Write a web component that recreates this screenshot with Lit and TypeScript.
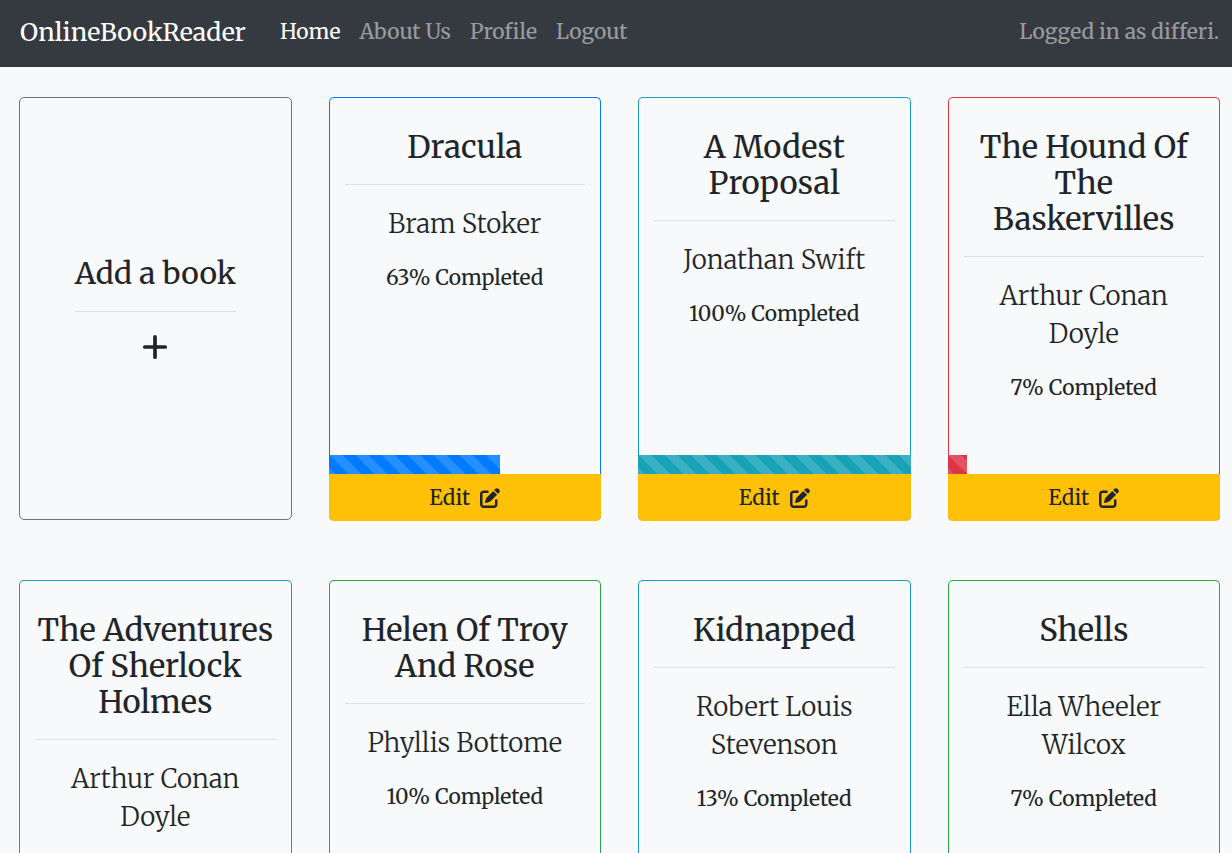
import { LitElement, html, css } from "lit";
import { customElement, property } from "lit/decorators.js";
import { classMap } from "lit/directives/class-map.js";

type Tone = "primary" | "info" | "danger" | "success";

interface Book {
  title: string;
  author: string;
  progress: number;
  tone: Tone;
}

const BOOKS: Book[] = [
  { title: "Dracula", author: "Bram Stoker", progress: 63, tone: "primary" },
  { title: "A Modest Proposal", author: "Jonathan Swift", progress: 100, tone: "info" },
  { title: "The Hound Of The Baskervilles", author: "Arthur Conan Doyle", progress: 7, tone: "danger" },
  { title: "The Adventures Of Sherlock Holmes", author: "Arthur Conan Doyle", progress: 10, tone: "info" },
  { title: "Helen Of Troy And Rose", author: "Phyllis Bottome", progress: 10, tone: "success" },
  { title: "Kidnapped", author: "Robert Louis Stevenson", progress: 13, tone: "info" },
  { title: "Shells", author: "Ella Wheeler Wilcox", progress: 7, tone: "success" },
];

@customElement("nav-bar")
class NavBar extends LitElement {
  static styles = css`
    :host {
      display: block;
      background: #343a40;
    }
    .bar {
      display: flex;
      align-items: center;
      min-height: 67px;
      padding: 0 13px 4px 20px;
      box-sizing: border-box;
    }
    a {
      text-decoration: none;
      color: rgba(255, 255, 255, 0.5);
    }
    .brand {
      margin-right: 34px;
      font-size: 25px;
      line-height: 36px;
      color: #fff;
    }
    .links {
      display: flex;
      gap: 19px;
      margin: 0;
      padding: 0;
      list-style: none;
    }
    .links .active {
      color: #fff;
    }
    .user {
      margin-left: auto;
      color: rgba(255, 255, 255, 0.5);
    }
  `;

  render() {
    return html`
      <nav class="bar">
        <a class="brand" href="#">OnlineBookReader</a>
        <ul class="links">
          <li><a class="active" href="#home">Home</a></li>
          <li><a href="#about">About Us</a></li>
          <li><a href="#profile">Profile</a></li>
          <li><a href="#logout">Logout</a></li>
        </ul>
        <span class="user">Logged in as differi.</span>
      </nav>
    `;
  }
}

@customElement("book-card")
class BookCard extends LitElement {
  @property({ attribute: false }) book!: Book;

  static styles = css`
    :host {
      display: flex;
    }
    .card {
      --tone: #007bff;
      flex: 1;
      min-width: 0;
      display: flex;
      flex-direction: column;
      border: 1px solid var(--tone);
      border-bottom: 0;
      border-radius: 5px;
      text-align: center;
    }
    .info {
      --tone: #17a2b8;
    }
    .danger {
      --tone: #dc3545;
    }
    .success {
      --tone: #28a745;
    }
    .body {
      flex: 1;
      padding: 31px 15px;
    }
    h3 {
      margin: 0;
      font-size: 31px;
      line-height: 36px;
      font-weight: 400;
    }
    hr {
      margin: 19px 0 20px;
      border: 0;
      border-top: 1px solid rgba(0, 0, 0, 0.1);
    }
    p {
      margin: 0;
    }
    .author {
      margin-bottom: 19px;
      padding: 0 16px;
      font-size: 26px;
      line-height: 38px;
      font-weight: 300;
    }
    .progress {
      margin: 0 -1px;
    }
    .fill {
      height: 19px;
      background-color: var(--tone);
      background-image: linear-gradient(
        45deg,
        rgba(255, 255, 255, 0.15) 25%,
        transparent 25%,
        transparent 50%,
        rgba(255, 255, 255, 0.15) 50%,
        rgba(255, 255, 255, 0.15) 75%,
        transparent 75%
      );
      background-size: 26px 26px;
    }
    .edit {
      display: flex;
      align-items: center;
      justify-content: center;
      gap: 10px;
      height: 47px;
      margin: 0 -1px;
      padding: 0;
      border: 0;
      border-radius: 0 0 5px 5px;
      background: #ffc107;
      color: #212529;
      font: inherit;
      cursor: pointer;
    }
    .edit svg {
      width: 20px;
      height: 20px;
      fill: currentColor;
    }
  `;

  render() {
    const { title, author, progress, tone } = this.book;
    return html`
      <article class=${classMap({ card: true, [tone]: true })}>
        <div class="body">
          <h3>${title}</h3>
          <hr />
          <p class="author">${author}</p>
          <p>${progress}% Completed</p>
        </div>
        <div class="progress">
          <div class="fill" style="width: ${progress}%"></div>
        </div>
        <button class="edit" type="button">
          Edit
          <svg viewBox="0 0 512 512" aria-hidden="true">
            <path d="M471.6 21.7c-21.9-21.9-57.3-21.9-79.2 0L362.3 51.7l97.9 97.9 30.1-30.1c21.9-21.9 21.9-57.3 0-79.2L471.6 21.7zm-299.2 220c-6.1 6.1-10.8 13.6-13.5 21.9l-29.6 88.8c-2.9 8.6-.6 18.1 5.8 24.6s15.9 8.7 24.6 5.8l88.8-29.6c8.2-2.7 15.7-7.4 21.9-13.5L437.7 172.3 339.7 74.3 172.4 241.7zM96 64C43 64 0 107 0 160V416c0 53 43 96 96 96H352c53 0 96-43 96-96V320c0-17.7-14.3-32-32-32s-32 14.3-32 32v96c0 17.7-14.3 32-32 32H96c-17.7 0-32-14.3-32-32V160c0-17.7 14.3-32 32-32h96c17.7 0 32-14.3 32-32s-14.3-32-32-32H96z" />
          </svg>
        </button>
      </article>
    `;
  }
}

@customElement("app-root")
class AppRoot extends LitElement {
  static styles = css`
    :host {
      display: block;
      min-height: 100vh;
      background: #f8f9fa;
      color: #212529;
      font-family: Merriweather, "DejaVu Serif Condensed", "DejaVu Serif", serif;
      font-size: 21px;
      line-height: 32px;
    }
    .shelf {
      display: grid;
      grid-template-columns: repeat(auto-fill, minmax(260px, 1fr));
      grid-auto-rows: minmax(424px, auto);
      gap: 59px 37px;
      padding: 30px 12px 30px 19px;
    }
    .add {
      display: flex;
      flex-direction: column;
      align-items: center;
      justify-content: center;
      margin-bottom: 1px;
      border: 1px solid #6c757d;
      border-radius: 5px;
      color: inherit;
      text-decoration: none;
    }
    .label {
      padding-bottom: 20px;
      margin-bottom: 20px;
      border-bottom: 1px solid rgba(0, 0, 0, 0.1);
      font-size: 30px;
      line-height: 36px;
    }
    .plus {
      width: 26px;
      height: 30px;
      fill: currentColor;
    }
  `;

  render() {
    return html`
      <nav-bar></nav-bar>
      <main class="shelf">
        <a class="add" href="#add">
          <span class="label">Add a book</span>
          <svg class="plus" viewBox="0 0 448 512" aria-hidden="true">
            <path d="M256 80c0-17.7-14.3-32-32-32s-32 14.3-32 32V224H48c-17.7 0-32 14.3-32 32s14.3 32 32 32H192V432c0 17.7 14.3 32 32 32s32-14.3 32-32V288H400c17.7 0 32-14.3 32-32s-14.3-32-32-32H256V80z" />
          </svg>
        </a>
        ${BOOKS.map((book) => html`<book-card .book=${book}></book-card>`)}
      </main>
    `;
  }
}
